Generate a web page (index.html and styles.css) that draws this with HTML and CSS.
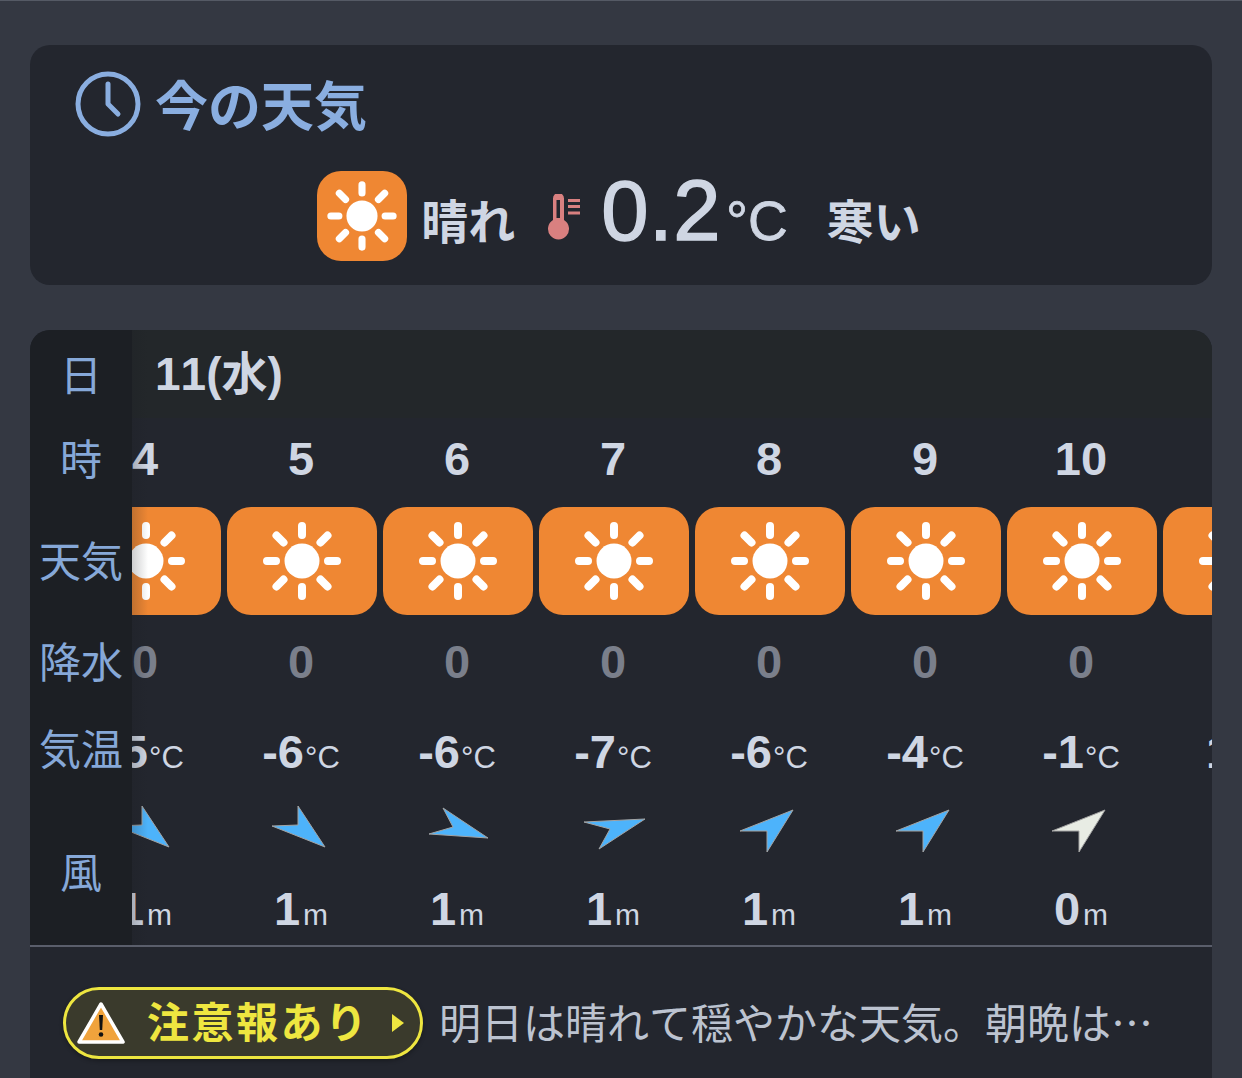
FILE: index.html
```html
<!DOCTYPE html>
<html lang="ja">
<head>
<meta charset="utf-8">
<title>今の天気</title>
<link rel="stylesheet" href="styles.css">
</head>
<body>
<svg class="defs" width="0" height="0" aria-hidden="true">
  <symbol id="sun" viewBox="-45 -45 90 90">
    <circle r="17.5" fill="#fff"/>
    <g stroke="#fff" stroke-width="8" stroke-linecap="round">
      <path d="M0-35V-26M0 26V35M-35 0H-26M26 0H35M-25.5-25.5L-18.5-18.5M25.5-25.5L18.5-18.5M-25.5 25.5L-18.5 18.5M25.5 25.5L18.5 18.5"/>
    </g>
  </symbol>
</svg>
<main class="page">
  <section class="card now">
    <h2 class="now-title">
      <svg class="clock" viewBox="0 0 66 66"><circle cx="33" cy="33" r="30" fill="none" stroke="#8aaee0" stroke-width="5"/><path d="M33 13V33L43 43" fill="none" stroke="#8aaee0" stroke-width="5" stroke-linecap="round" stroke-linejoin="round"/></svg>
      <span class="title-text">今の天気</span>
    </h2>
    <div class="now-body">
      <span class="now-icon"><svg class="now-sun"><use href="#sun"/></svg></span>
      <span class="now-label">晴れ</span>
      <svg class="thermo" viewBox="0 0 34 46"><path d="M6 2.5A5.5 5.5 0 0 1 17 2.500V24A10.500 10.500 0 1 1 6 24Z" transform="translate(0 2)" fill="#d98080"/><rect x="9.500" y="6" width="3.500" height="18" fill="#23262e"/><path d="M21 6.500H33M21 12.500H33M21 19H33" stroke="#d98080" stroke-width="3"/></svg>
      <span class="now-temp">0.2<small>°C</small></span>
      <span class="now-feel">寒い</span>
    </div>
  </section>

  <section class="card forecast">
    <div class="table">
      <div class="labels">
        <div class="r-date lab">日</div>
        <div class="r-hour lab">時</div>
        <div class="r-icon lab">天気</div>
        <div class="r-rain lab">降水</div>
        <div class="r-temp lab">気温</div>
        <div class="r-wind lab">風</div>
      </div>
      <div class="scroll">
        <div class="track">
          <div class="r-date date-row"><span class="date">11(水)</span></div>
          <div class="r-hour row hour"><span>4</span><span>5</span><span>6</span><span>7</span><span>8</span><span>9</span><span>10</span><span>11</span></div>
          <div class="r-icon row">
            <span class="tile"><svg class="tile-sun"><use href="#sun"/></svg></span>
            <span class="tile"><svg class="tile-sun"><use href="#sun"/></svg></span>
            <span class="tile"><svg class="tile-sun"><use href="#sun"/></svg></span>
            <span class="tile"><svg class="tile-sun"><use href="#sun"/></svg></span>
            <span class="tile"><svg class="tile-sun"><use href="#sun"/></svg></span>
            <span class="tile"><svg class="tile-sun"><use href="#sun"/></svg></span>
            <span class="tile"><svg class="tile-sun"><use href="#sun"/></svg></span>
            <span class="tile"><svg class="tile-sun"><use href="#sun"/></svg></span>
          </div>
          <div class="r-rain row rain"><span>0</span><span>0</span><span>0</span><span>0</span><span>0</span><span>0</span><span>0</span><span>0</span></div>
          <div class="r-temp row temp">
            <span>-5<small>°C</small></span><span>-6<small>°C</small></span><span>-6<small>°C</small></span><span>-7<small>°C</small></span><span>-6<small>°C</small></span><span>-4<small>°C</small></span><span>-1<small>°C</small></span><span>1<small>°C</small></span>
          </div>
          <div class="r-wind wind">
            <div class="row arrows">
              <svg class="arrow" viewBox="0 0 156 60"><polygon points="49,26 75,25 75,6 102,47"/></svg>
              <svg class="arrow" viewBox="0 0 156 60"><polygon points="49,26 75,25 75,6 102,47"/></svg>
              <svg class="arrow" viewBox="0 0 156 60"><polygon points="50,34 74,27 64,8 109,38"/></svg>
              <svg class="arrow" viewBox="0 0 156 60"><polygon points="49,22 110,19 64,49 75,29"/></svg>
              <svg class="arrow" viewBox="0 0 156 60"><polygon points="49,31 102,10 76,52 76,31"/></svg>
              <svg class="arrow" viewBox="0 0 156 60"><polygon points="49,31 102,10 76,52 76,31"/></svg>
              <svg class="arrow calm" viewBox="0 0 156 60"><polygon points="49,31 102,10 76,52 76,31"/></svg>
              <svg class="arrow" viewBox="0 0 156 60"><polygon points="60,31 102,10 76,52 76,31"/></svg>
            </div>
            <div class="row speed">
              <span>1<small>m</small></span><span>1<small>m</small></span><span>1<small>m</small></span><span>1<small>m</small></span><span>1<small>m</small></span><span>1<small>m</small></span><span>0<small>m</small></span><span>1<small>m</small></span>
            </div>
          </div>
        </div>
      </div>
    </div>
    <div class="notice">
      <span class="pill">
        <svg class="warn" viewBox="0 0 48 44"><path d="M24 3L46 41H2Z" fill="#f0a33c" stroke="#fff" stroke-width="3.500" stroke-linejoin="round"/><path d="M22 14H26L25.200 29H22.800Z" fill="#111"/><circle cx="24" cy="33.500" r="2.300" fill="#111"/></svg>
        <span class="pill-text">注意報あり</span>
        <svg class="pill-arrow" viewBox="0 0 12 18"><path d="M0 0L12 9L0 18Z" fill="#eee640"/></svg>
      </span>
      <span class="notice-text">明日は晴れて穏やかな天気。朝晩は…</span>
    </div>
  </section>
</main>
</body>
</html>
```
FILE: styles.css
```css
* { box-sizing: border-box; }
html, body { margin: 0; height: 100%; }
body {
  background: #343842;
  border-top: 1px solid #555a65;
  overflow: hidden;
  font-family: "Noto Sans CJK JP", "Liberation Sans", sans-serif;
  color: #cfd6e3;
  font-kerning: none;
}
.defs { position: absolute; }
.page {
  height: 1077px;
  padding: 44px 30px 0;
  display: flex;
  flex-direction: column;
  gap: 45px;
  overflow: hidden;
}
.card {
  background: #23262e;
  border-radius: 20px;
  overflow: hidden;
  flex: none;
}

/* current weather */
.now { height: 240px; padding: 26px 45px 0; }
.now-title {
  margin: 0;
  height: 66px;
  display: flex;
  align-items: center;
  gap: 14px;
  font-size: 53px;
  font-weight: 700;
  line-height: 62px;
  color: #8aaee0;
}
.title-text { padding-bottom: 3px; }
.clock { width: 66px; height: 66px; flex: none; }
.now-body {
  display: flex;
  align-items: center;
  justify-content: center;
  margin: 34px -45px 0 -49px;
  height: 90px;
}
.now-icon {
  width: 90px;
  height: 90px;
  border-radius: 24px;
  background: #ef8733;
  display: flex;
  align-items: center;
  justify-content: center;
  flex: none;
}
.now-sun { width: 80px; height: 80px; }
.now-label, .now-feel {
  font-size: 47px;
  font-weight: 700;
  line-height: 90px;
  position: relative;
  top: 3px;
}
.now-label { margin-left: 14px; }
.thermo { width: 34px; height: 46px; margin-left: 32px; position: relative; top: 1px; }
.now-temp {
  font-family: "Liberation Sans", sans-serif;
  font-size: 85px;
  letter-spacing: .5px;
  -webkit-text-stroke: 1.500px #cfd6e3;
  line-height: 90px;
  margin-left: 20px;
}
.now-temp small { font-size: 55px; margin-left: 5px; letter-spacing: 0; -webkit-text-stroke: .8px #cfd6e3; }
.now-feel { margin-left: 39px; }

/* forecast table */
.forecast { height: 800px; }
.table { display: flex; height: 617px; border-bottom: 2px solid #5a5e6b; }
.labels {
  width: 102px;
  flex: none;
  background: #1c1f24;
  position: relative;
  z-index: 1;
}
.labels::after {
  content: "";
  position: absolute;
  top: 0;
  bottom: 0;
  left: 100%;
  width: 16px;
  background: linear-gradient(to right, rgba(28, 31, 36, .22), rgba(28, 31, 36, 0));
}
.lab {
  display: flex;
  align-items: center;
  justify-content: center;
  padding-bottom: 5px;
  font-size: 42px;
  color: #86a8d8;
}
.r-date { height: 90px; }
.r-hour { height: 78px; }
.r-icon { height: 126px; }
.r-rain { height: 76px; }
.r-temp { height: 98px; }
.r-wind { height: 147px; }
.scroll { flex: 1; overflow: hidden; }
.track { margin-left: -65px; width: 1248px; font-family: "Liberation Sans", "Noto Sans CJK JP", sans-serif; }
.date-row {
  background: #23272a;
  padding-left: 88px;
  display: flex;
  align-items: center;
  margin-right: -1px;
  height: 88px;
  margin-bottom: 2px;
}
.date { font-size: 46px; font-weight: 700; line-height: 1; }
.row { display: flex; align-items: center; }
.row > * { width: 156px; flex: none; text-align: center; }
.hour, .rain, .temp, .speed { font-size: 47px; font-weight: 700; line-height: 1; }
.hour { padding-bottom: 2px; }
.rain { color: #7a7f8b; padding-bottom: 2px; }
.temp { padding-top: 4px; }
small { font-weight: 400; }
.temp small { font-size: 31px; margin-left: 1px; }
.speed small { font-size: 30px; margin-left: 3px; }
.tile {
  height: 108px;
  margin: 0 2px 0 4px;
  width: 150px !important;
  border-radius: 24px;
  background: #ef8733;
  display: flex;
  align-items: center;
  justify-content: center;
}
.tile-sun { width: 90px; height: 90px; }
.wind { padding-top: 2px; }
.arrows { height: 60px; }
.arrow { height: 60px; display: block; }
.arrow polygon { fill: #4db3fb; stroke: #a3a3a3; stroke-width: 1; stroke-linejoin: miter; }
.calm polygon { fill: #e8ece4; }
.speed { height: 85px; padding-top: 12px; }

/* notice */
.notice {
  display: flex;
  align-items: center;
  padding: 40px 33px 0;
  height: 112px;
}
.pill {
  width: 360px;
  height: 72px;
  flex: none;
  border: 3px solid #eee640;
  border-radius: 36px;
  background: #3a3a2c;
  display: flex;
  align-items: center;
  padding-left: 11px;
  color: #eee640;
  box-shadow: 0 2px 4px rgba(0, 0, 0, .3);
}
.warn { width: 48px; height: 44px; flex: none; }
.pill-text {
  font-size: 42px;
  font-weight: 700;
  letter-spacing: 2.500px;
  margin-left: 22px;
  padding-bottom: 6px;
  white-space: nowrap;
  line-height: 1;
}
.pill-arrow { width: 12px; height: 18px; margin-left: 22px; flex: none; }
.notice-text {
  font-size: 42px;
  color: #bcc3d0;
  margin-left: 16px;
  padding-bottom: 4px;
  white-space: nowrap;
  line-height: 1;
}
```
